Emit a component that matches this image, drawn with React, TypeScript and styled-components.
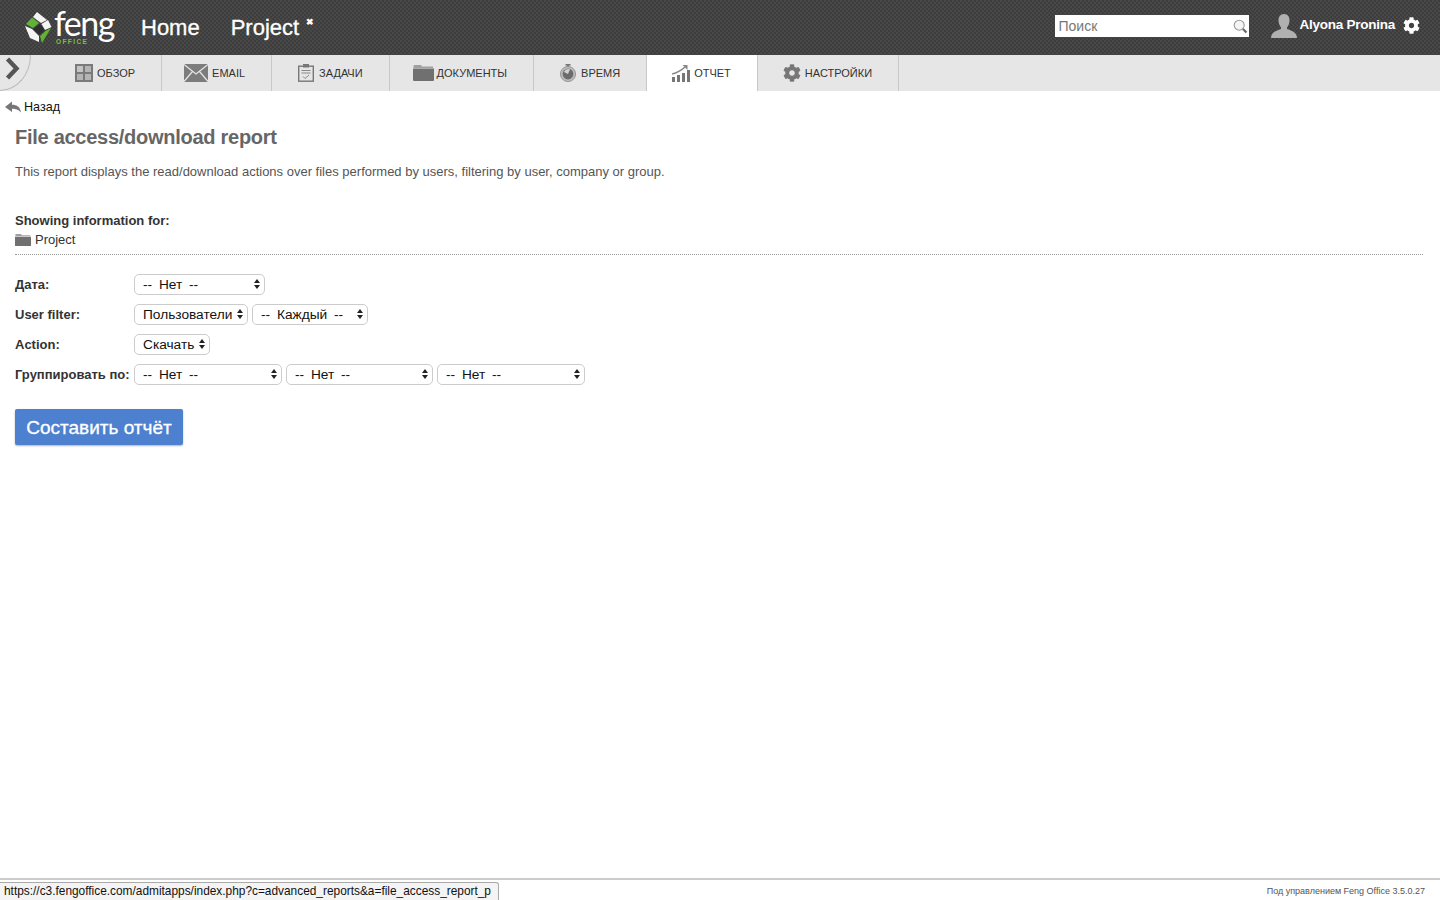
import React from 'react';
import styled, { createGlobalStyle } from 'styled-components';
import { FaCog } from 'react-icons/fa';

const GlobalStyle = createGlobalStyle`
  html, body {
    margin: 0;
    padding: 0;
    height: 100%;
    background: #fff;
    font-family: "Liberation Sans", Arial, sans-serif;
  }
`;

const OverviewIcon = () => (
  <svg width="18" height="18" viewBox="0 0 18 18">
    <rect x="0" y="0" width="18" height="18" fill="#7a7a7a" />
    <rect x="2" y="2" width="6" height="6" fill="#c4c4c4" />
    <rect x="10" y="2" width="6" height="6" fill="#b4b4b4" />
    <rect x="2" y="10" width="6" height="6" fill="#b4b4b4" />
    <rect x="10" y="10" width="6" height="6" fill="#b4b4b4" />
  </svg>
);

const EmailIcon = () => (
  <svg width="24" height="18" viewBox="0 0 24 18">
    <rect width="24" height="18" fill="#7c7c7c" />
    <path d="M0 0.5 L12 10 L24 0.5 M0 17.5 L8.5 7.5 M24 17.5 L15.5 7.5" stroke="#e6e6e6" strokeWidth="1.2" fill="none" />
  </svg>
);

const TasksIcon = () => (
  <svg width="16" height="18" viewBox="0 0 16 18">
    <rect x="0.7" y="2.2" width="14.6" height="15" fill="none" stroke="#777" strokeWidth="1.4" />
    <rect x="5" y="0" width="6" height="3.5" fill="#777" />
    <path d="M3.5 6.5 H12.5 M3.5 9 H12.5" stroke="#888" strokeWidth="1" />
    <path d="M5 12.5 L7 14.5 L11 11" stroke="#888" strokeWidth="1" fill="none" />
  </svg>
);

const FolderIcon = ({ size = 21 }: { size?: number }) => (
  <svg width={size} height={(size * 16) / 21} viewBox="0 0 21 16">
    <path d="M1 0 H8 L9 1.5 H20 V3 H0.5 V1 Z" fill="#a0a0a0" />
    <path d="M0 3.6 H21 V15 Q21 16 20 16 H1 Q0 16 0 15 Z" fill="#707070" />
  </svg>
);

const TimeIcon = () => (
  <svg width="16" height="18" viewBox="0 0 16 18">
    <rect x="5.5" y="0" width="5" height="1.6" fill="#777" />
    <rect x="7" y="1" width="2" height="2" fill="#777" />
    <circle cx="8" cy="10" r="7.6" fill="#bcbcbc" stroke="#8a8a8a" strokeWidth="0.8" />
    <circle cx="8" cy="10" r="5.4" fill="#6c6c6c" />
    <path d="M4 8 A5 5 0 0 1 10 5.2 L8 10 Z" fill="#d2d2d2" />
  </svg>
);

const ReportIcon = () => (
  <svg width="19" height="19" viewBox="0 0 19 19">
    <rect x="0" y="13" width="3" height="5" fill="#777" />
    <rect x="5" y="11" width="3" height="7" fill="#777" />
    <rect x="10" y="9" width="3" height="9" fill="#777" />
    <rect x="15" y="6" width="3" height="12" fill="#777" />
    <path d="M0 10 Q7 8.5 13 3" stroke="#888" strokeWidth="1.6" fill="none" />
    <path d="M10.5 1 H15.5 V6 Z" fill="#888" />
  </svg>
);

const BackArrow = () => (
  <svg width="16" height="12" viewBox="0 0 16 12">
    <path d="M0 6 L7 0.5 V3.8 C12 3.8 15 6 16 11.5 C13 8.5 11 7.8 7 7.8 V11 Z" fill="#777" />
  </svg>
);

const PanelChevron = () => (
  <svg width="15" height="23" viewBox="0 0 15 23">
    <path d="M2.5 2 L11.5 11.5 L2.5 21" stroke="#555" strokeWidth="4.4" fill="none" />
  </svg>
);

const UserIcon = () => (
  <svg width="26" height="24" viewBox="0 0 26 24">
    <path
      d="M13 0 C17 0 18.5 3 18.5 6.5 C18.5 10 17 12 16 13.5 V15 C20 16.5 26 18 26 24 H0 C0 18 6 16.5 10 15 V13.5 C9 12 7.5 10 7.5 6.5 C7.5 3 9 0 13 0 Z"
      fill="#b0b0b0"
    />
  </svg>
);

const SearchIcon = () => (
  <svg width="15" height="15" viewBox="0 0 15 15">
    <circle cx="6.2" cy="6.2" r="5" fill="#f4f4f4" stroke="#999" strokeWidth="1.1" />
    <path d="M10 10 L13.5 13.5" stroke="#666" strokeWidth="2.2" />
  </svg>
);

const LogoMark = () => (
  <svg width="27" height="31" viewBox="0 0 27 31">
    <path d="M15 12 L20 18 L14 23 L8 17 Z" fill="#2e2e2e" />
    <path d="M12 0 L22 8 L16 11 L8 5 Z" fill="#f4f4f4" />
    <path d="M7 5.5 L14 11 L8 16 L1 12 Z" fill="#62b335" />
    <path d="M23 8 L26.5 15 L20 18 L16.5 12 Z" fill="#f4f4f4" />
    <path d="M20.5 19 L26 16 L17 31 L15 24 Z" fill="#62b335" />
    <path d="M0 14 L7 17 L14 24 L14 30 L5 26 Z" fill="#f4f4f4" />
  </svg>
);

const ArrowsIcon = () => (
  <svg width="6" height="10" viewBox="0 0 6 10">
    <path d="M3 0 L6 4 H0 Z M3 10 L0 6 H6 Z" fill="#222" />
  </svg>
);

const Page = styled.div`
  position: relative;
  height: 100vh;
  display: flex;
  flex-direction: column;
  overflow: hidden;
`;

const TopBar = styled.header`
  height: 55px;
  flex: none;
  display: flex;
  align-items: center;
  padding: 0 21px 0 25px;
  box-sizing: border-box;
  background-color: #434343;
  background-image: repeating-conic-gradient(#3d3d3d 0 25%, #484848 0 50%);
  background-size: 4px 4px;
`;

const Logo = styled.div`
  display: flex;
  align-items: center;
  width: 116px;
  flex: none;
`;

const LogoWords = styled.div`
  position: relative;
  margin-left: 1px;
  height: 45px;
  width: 62px;
`;

const LogoFeng = styled.span`
  position: absolute;
  left: 1px;
  top: 4px;
  font-family: Lato, "Open Sans", sans-serif;
  font-weight: 400;
  font-size: 34px;
  line-height: 28px;
  letter-spacing: -1.5px;
  color: #fff;
`;

const LogoOffice = styled.span`
  position: absolute;
  left: 3px;
  top: 33px;
  font-size: 6.5px;
  line-height: 8px;
  font-weight: 700;
  letter-spacing: 1.4px;
  color: #7cc242;
`;

const NavLink = styled.a`
  font-size: 22px;
  line-height: 28px;
  color: #fff;
  margin-right: 31px;
  -webkit-text-stroke: 0.3px #fff;
`;

const CloseMark = styled.span`
  align-self: flex-start;
  margin: 17px 0 0 -24px;
  font-size: 9px;
  line-height: 11px;
  font-weight: 700;
  color: #fff;
`;

const Spacer = styled.div`
  flex: 1;
`;

const SearchBox = styled.div`
  width: 194px;
  height: 22px;
  margin-top: -3px;
  display: flex;
  align-items: center;
  background: #fff;
  box-sizing: border-box;
  padding: 0 1px 0 3px;
`;

const SearchInput = styled.input`
  flex: 1;
  min-width: 0;
  border: 0;
  outline: 0;
  padding: 0;
  font-family: inherit;
  font-size: 14px;
  color: #777;
  &::placeholder {
    color: #777;
    opacity: 1;
  }
`;

const UserBlock = styled.div`
  margin-left: 22px;
  display: flex;
  align-items: center;
  margin-top: -4px;
  margin-right: -1px;
  color: #fff;
  font-size: 13.5px;
  font-weight: 700;
  letter-spacing: -0.25px;
  svg:last-child {
    margin-left: 8px;
    font-size: 17px;
  }
`;

const UserName = styled.span`
  margin-left: 2px;
  position: relative;
  top: -1px;
`;

const TabBar = styled.nav`
  height: 36px;
  flex: none;
  display: flex;
  background: #e6e6e6;
`;

const PanelToggle = styled.div`
  width: 31px;
  height: 36px;
  flex: none;
  box-sizing: border-box;
  padding: 2px 0 0 5px;
  border-right: 1px solid #bbb;
  border-bottom: 1px solid #bbb;
  border-bottom-right-radius: 31px 36px;
`;

const Tab = styled.a<{ $active?: boolean; $left: number; $gap: number }>`
  display: flex;
  align-items: center;
  gap: ${(p) => p.$gap}px;
  padding: 0 26px 0 ${(p) => p.$left}px;
  border-right: 1px solid #c9c9c9;
  font-size: 11px;
  color: #333;
  background: ${(p) => (p.$active ? '#fff' : 'transparent')};
`;

const Content = styled.main`
  flex: 1;
  padding: 8px 17px 0 15px;
`;

const BackLink = styled.a`
  display: flex;
  align-items: center;
  gap: 3px;
  margin-left: -10px;
  font-size: 12.6px;
  line-height: 16px;
  color: #111;
`;

const Title = styled.h1`
  margin: 10px 0 0;
  font-size: 20px;
  line-height: 24px;
  font-weight: 700;
  letter-spacing: -0.27px;
  color: #666;
`;

const Description = styled.p`
  margin: 15px 0 0;
  font-size: 13px;
  line-height: 16px;
  color: #555;
`;

const ScopeTitle = styled.div`
  margin-top: 33px;
  font-size: 13px;
  line-height: 16px;
  font-weight: 700;
  color: #333;
`;

const ScopeItem = styled.div`
  margin-top: 3px;
  display: flex;
  align-items: center;
  gap: 4px;
  font-size: 13px;
  line-height: 16px;
  color: #333;
`;

const Divider = styled.div`
  margin-top: 6px;
  border-top: 1px dotted #999;
`;

const Form = styled.form`
  margin-top: 19px;
  display: flex;
  flex-direction: column;
  gap: 8px;
`;

const FormRow = styled.div`
  display: flex;
  align-items: flex-start;
  height: 22px;
`;

const FieldLabel = styled.label`
  width: 119px;
  flex: none;
  font-size: 13px;
  line-height: 22px;
  font-weight: 700;
  color: #333;
  white-space: nowrap;
`;

const SelectGroup = styled.div`
  display: flex;
  gap: 4px;
`;

const SelectWrap = styled.div<{ $width: number }>`
  position: relative;
  width: ${(p) => p.$width}px;
  height: 21px;
  svg {
    position: absolute;
    right: 5px;
    top: 5px;
    pointer-events: none;
  }
`;

const NativeSelect = styled.select`
  appearance: none;
  width: 100%;
  height: 100%;
  box-sizing: border-box;
  padding: 0 0 1px 8px;
  background: #fff;
  border: 1px solid #ccc;
  border-radius: 5px;
  font-family: inherit;
  font-size: 13.7px;
  word-spacing: 3px;
  color: #111;
`;

const SubmitButton = styled.button`
  margin-top: 15px;
  display: block;
  width: 168px;
  height: 36px;
  padding: 1px 0 0;
  border: 0;
  border-radius: 2px;
  background: #4d81cf;
  box-shadow: 0 1px 2px rgba(0, 0, 0, 0.3);
  color: #fff;
  font-family: inherit;
  font-size: 19px;
  font-weight: 400;
  -webkit-text-stroke: 0.3px #fff;
`;

const Footer = styled.footer`
  height: 22px;
  flex: none;
  box-sizing: border-box;
  border-top: 2px solid #ccc;
  display: flex;
  align-items: center;
  justify-content: flex-end;
  padding: 2px 15px 0 0;
  font-size: 9px;
  color: #555;
`;

const StatusTip = styled.div`
  position: absolute;
  left: 0;
  bottom: 0;
  height: 18px;
  width: 499px;
  box-sizing: border-box;
  padding-left: 4px;
  background: #f4f4f4;
  border: 1px solid #aaa;
  border-left: 0;
  border-bottom: 0;
  border-top-right-radius: 3px;
  font-size: 11.88px;
  line-height: 17px;
  color: #111;
  white-space: nowrap;
`;

const TABS = [
  { label: 'Обзор', icon: <OverviewIcon />, left: 44, gap: 4 },
  { label: 'Email', icon: <EmailIcon />, left: 22, gap: 4 },
  { label: 'Задачи', icon: <TasksIcon />, left: 26, gap: 5 },
  { label: 'Документы', icon: <FolderIcon />, left: 23, gap: 3 },
  { label: 'Время', icon: <TimeIcon />, left: 26, gap: 5 },
  { label: 'Отчет', icon: <ReportIcon />, left: 25, gap: 3, active: true },
  { label: 'Настройки', icon: <FaCog size={18} color="#777" />, left: 25, gap: 4 },
];

const FILTERS = [
  { label: 'Дата:', selects: [{ width: 131, text: '-- Нет --' }] },
  {
    label: 'User filter:',
    selects: [
      { width: 114, text: 'Пользователи' },
      { width: 116, text: '-- Каждый --' },
    ],
  },
  { label: 'Action:', selects: [{ width: 76, text: 'Скачать' }] },
  {
    label: 'Группировать по:',
    selects: [
      { width: 148, text: '-- Нет --' },
      { width: 147, text: '-- Нет --' },
      { width: 148, text: '-- Нет --' },
    ],
  },
];

const App = () => {
  return (
    <Page>
      <GlobalStyle />
      <TopBar>
        <Logo>
          <LogoMark />
          <LogoWords>
            <LogoFeng>feng</LogoFeng>
            <LogoOffice>OFFICE</LogoOffice>
          </LogoWords>
        </Logo>
        <NavLink>Home</NavLink>
        <NavLink>Project</NavLink>
        <CloseMark>✖</CloseMark>
        <Spacer />
        <SearchBox>
          <SearchInput placeholder="Поиск" />
          <SearchIcon />
        </SearchBox>
        <UserBlock>
          <UserIcon />
          <UserName>Alyona Pronina</UserName>
          <FaCog />
        </UserBlock>
      </TopBar>
      <TabBar>
        <PanelToggle>
          <PanelChevron />
        </PanelToggle>
        {TABS.map((tab) => (
          <Tab key={tab.label} $active={tab.active} $left={tab.left} $gap={tab.gap}>
            {tab.icon}
            {tab.label.toUpperCase()}
          </Tab>
        ))}
      </TabBar>
      <Content>
        <BackLink>
          <BackArrow />
          Назад
        </BackLink>
        <Title>File access/download report</Title>
        <Description>
          This report displays the read/download actions over files performed by users, filtering by user, company or
          group.
        </Description>
        <ScopeTitle>Showing information for:</ScopeTitle>
        <ScopeItem>
          <FolderIcon size={16} />
          Project
        </ScopeItem>
        <Divider />
        <Form>
          {FILTERS.map((row) => (
            <FormRow key={row.label}>
              <FieldLabel>{row.label}</FieldLabel>
              <SelectGroup>
                {row.selects.map((s, idx) => (
                  <SelectWrap $width={s.width} key={`select-${idx}`}>
                    <NativeSelect defaultValue={s.text}>
                      <option>{s.text}</option>
                    </NativeSelect>
                    <ArrowsIcon />
                  </SelectWrap>
                ))}
              </SelectGroup>
            </FormRow>
          ))}
          <SubmitButton type="button">Составить отчёт</SubmitButton>
        </Form>
      </Content>
      <Footer>Под управлением Feng Office 3.5.0.27</Footer>
      <StatusTip>https://c3.fengoffice.com/admitapps/index.php?c=advanced_reports&amp;a=file_access_report_p</StatusTip>
    </Page>
  );
};

export default App;
